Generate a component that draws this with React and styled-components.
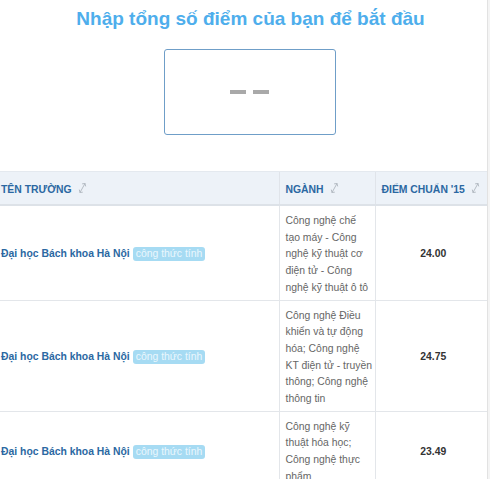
import React from 'react';
import styled, { createGlobalStyle } from 'styled-components';

const GlobalStyle = createGlobalStyle`
  html, body {
    margin: 0;
    padding: 0;
    background: #f4f4f4;
  }
  body {
    font-family: "Liberation Sans", Arial, sans-serif;
  }
`;

const Page = styled.div`
  width: 487px;
  min-height: 479px;
  background: #fff;
  border-right: 1px solid #e2e2e2;
  overflow: hidden;
`;

const Title = styled.h1`
  margin: 0;
  padding-top: 6px;
  text-align: center;
  font-size: 19px;
  line-height: 26px;
  font-weight: bold;
  color: #4eaeec;
  transform: translateX(7px);
`;

const ScoreBox = styled.div`
  width: 170px;
  height: 84px;
  margin: 17px auto 0;
  transform: translateX(6px);
  border: 1px solid #6f9ec8;
  border-radius: 3px;
  display: flex;
  align-items: center;
  justify-content: center;
  gap: 7px;
`;

const Dash = styled.span`
  display: block;
  width: 16px;
  height: 4px;
  background: #a9a9a9;
`;

const Table = styled.table`
  margin-top: 36px;
  width: 487px;
  border-collapse: collapse;
  table-layout: fixed;
  font-size: 10.4px;
`;

const HeadCell = styled.th`
  height: 32px;
  padding: 0 ${(p) => (p.first ? '1px' : '6px')};
  background: #edf2f8;
  border-top: 1px solid #e4e9ef;
  border-bottom: 2px solid #dde2e8;
  border-left: ${(p) => (p.first ? 'none' : '1px solid #e0e4ea')};
  text-align: left;
  font-weight: bold;
  color: #2b68a2;
  white-space: nowrap;
`;

const Cell = styled.td`
  padding: 7px 2px 3px ${(p) => (p.first ? '1px' : '6px')};
  border-bottom: 1px solid #e3e6ea;
  border-left: ${(p) => (p.first ? 'none' : '1px solid #e3e6ea')};
  line-height: 16.7px;
  vertical-align: middle;
  text-align: ${(p) => (p.center ? 'center' : 'left')};
  color: #666;
`;

const SchoolLink = styled.a`
  color: #2b68a2;
  font-weight: bold;
  text-decoration: none;
`;

const Badge = styled.span`
  display: inline-block;
  margin-left: 3px;
  padding: 0 3px;
  line-height: 14px;
  border-radius: 3px;
  background: #a6dbf3;
  color: #eaf7fd;
  font-size: 10.4px;
`;

const Score = styled.span`
  font-weight: bold;
  color: #333;
`;

const SortIcon = () => (
  <svg width="11" height="12" viewBox="0 0 11 12" style={{ marginLeft: 5, verticalAlign: -1 }}>
    <g stroke="#b5bcc4" strokeWidth="1" fill="none" strokeLinecap="round">
      <path d="M3 10.5 L8 1.5" />
      <path d="M5.5 1.8 L8 1.5 L8.6 4" />
      <path d="M2.4 8 L3 10.5 L5.4 10.2" />
    </g>
  </svg>
);

const rows = [
  {
    major: 'Công nghệ chế tạo máy - Công nghệ kỹ thuật cơ điện tử - Công nghệ kỹ thuật ô tô',
    score: '24.00',
  },
  {
    major: 'Công nghệ Điều khiển và tự động hóa; Công nghệ KT điện tử - truyền thông; Công nghệ thông tin',
    score: '24.75',
  },
  {
    major: 'Công nghệ kỹ thuật hóa học; Công nghệ thực phẩm',
    score: '23.49',
  },
];

export default function App() {
  return (
    <>
      <GlobalStyle />
      <Page>
        <Title>Nhập tổng số điểm của bạn để bắt đầu</Title>
        <ScoreBox>
          <Dash />
          <Dash />
        </ScoreBox>
        <Table>
          <colgroup>
            <col style={{ width: 279 }} />
            <col style={{ width: 96 }} />
            <col style={{ width: 112 }} />
          </colgroup>
          <thead>
            <tr>
              <HeadCell first>TÊN TRƯỜNG<SortIcon /></HeadCell>
              <HeadCell>NGÀNH<SortIcon /></HeadCell>
              <HeadCell>ĐIỂM CHUẨN '15<SortIcon /></HeadCell>
            </tr>
          </thead>
          <tbody>
            {rows.map((row, i) => (
              <tr key={i}>
                <Cell first>
                  <SchoolLink href="#">Đại học Bách khoa Hà Nội</SchoolLink>
                  <Badge>công thức tính</Badge>
                </Cell>
                <Cell>{row.major}</Cell>
                <Cell center>
                  <Score>{row.score}</Score>
                </Cell>
              </tr>
            ))}
          </tbody>
        </Table>
      </Page>
    </>
  );
}
